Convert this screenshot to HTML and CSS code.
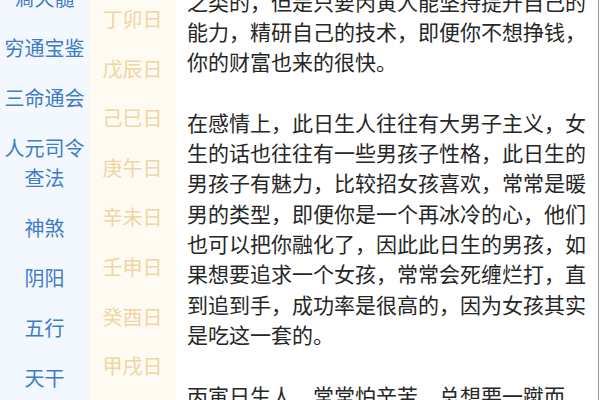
FILE: index.html
```html
<!DOCTYPE html>
<html lang="zh-CN">
<head>
    <meta charset="UTF-8">
    <meta name="viewport" content="width=device-width, initial-scale=1.0">
    <title>丙寅日</title>
    <link rel="stylesheet" href="styles.css">
</head>
<body>
    <div class="page">
        <ul class="nav">
            <li>滴天髓</li>
            <li>穷通宝鉴</li>
            <li>三命通会</li>
            <li>人元司令<br>查法</li>
            <li>神煞</li>
            <li>阴阳</li>
            <li>五行</li>
            <li>天干</li>
        </ul>
        <ul class="days">
            <li>丁卯日</li>
            <li>戊辰日</li>
            <li>己巳日</li>
            <li>庚午日</li>
            <li>辛未日</li>
            <li>壬申日</li>
            <li>癸酉日</li>
            <li>甲戌日</li>
        </ul>
        <div class="article">
            <p>之类的，但是只要丙寅人能坚持提升自己的能力，精研自己的技术，即便你不想挣钱，你的财富也来的很快。</p>
            <p>在感情上，此日生人往往有大男子主义，女生的话也往往有一些男孩子性格，此日生的男孩子有魅力，比较招女孩喜欢，常常是暖男的类型，即便你是一个再冰冷的心，他们也可以把你融化了，因此此日生的男孩，如果想要追求一个女孩，常常会死缠烂打，直到追到手，成功率是很高的，因为女孩其实是吃这一套的。</p>
            <p>丙寅日生人，常常怕辛苦，总想要一蹴而就。</p>
        </div>
    </div>
</body>
</html>
```

FILE: styles.css
```css
body {
    margin: 0;
    background-color: #ffffff;
    font-family: "Noto Sans CJK SC", "Noto Sans", sans-serif;
}

.page {
    display: flex;
    height: 400px;
    overflow: hidden;
}

.nav,
.days {
    list-style: none;
    margin: 0;
    padding: 0;
    flex-shrink: 0;
    text-align: center;
    font-size: 20px;
}

.nav {
    width: 89px;
    margin-top: -27px;
    background-color: #f3f8fe;
    color: #3f7cc6;
}

.nav li {
    padding: 10px 0;
    line-height: 30px;
}

.days {
    width: 87px;
    margin-top: -6px;
    background-color: #fffaf2;
    color: #efd6a3;
}

.days li {
    padding: 10px 0;
    line-height: 29.6px;
}

.article {
    flex: 1;
    margin-right: 1px;
    padding: 0 10px 0 11px;
    border-right: 1px solid #9c9c9c;
    color: #262626;
    font-size: 21px;
    line-height: 30.3px;
}

.article p {
    width: 400px;
    margin: 0 0 30.3px;
}

.article p:first-child {
    margin-top: -14.3px;
}
```
